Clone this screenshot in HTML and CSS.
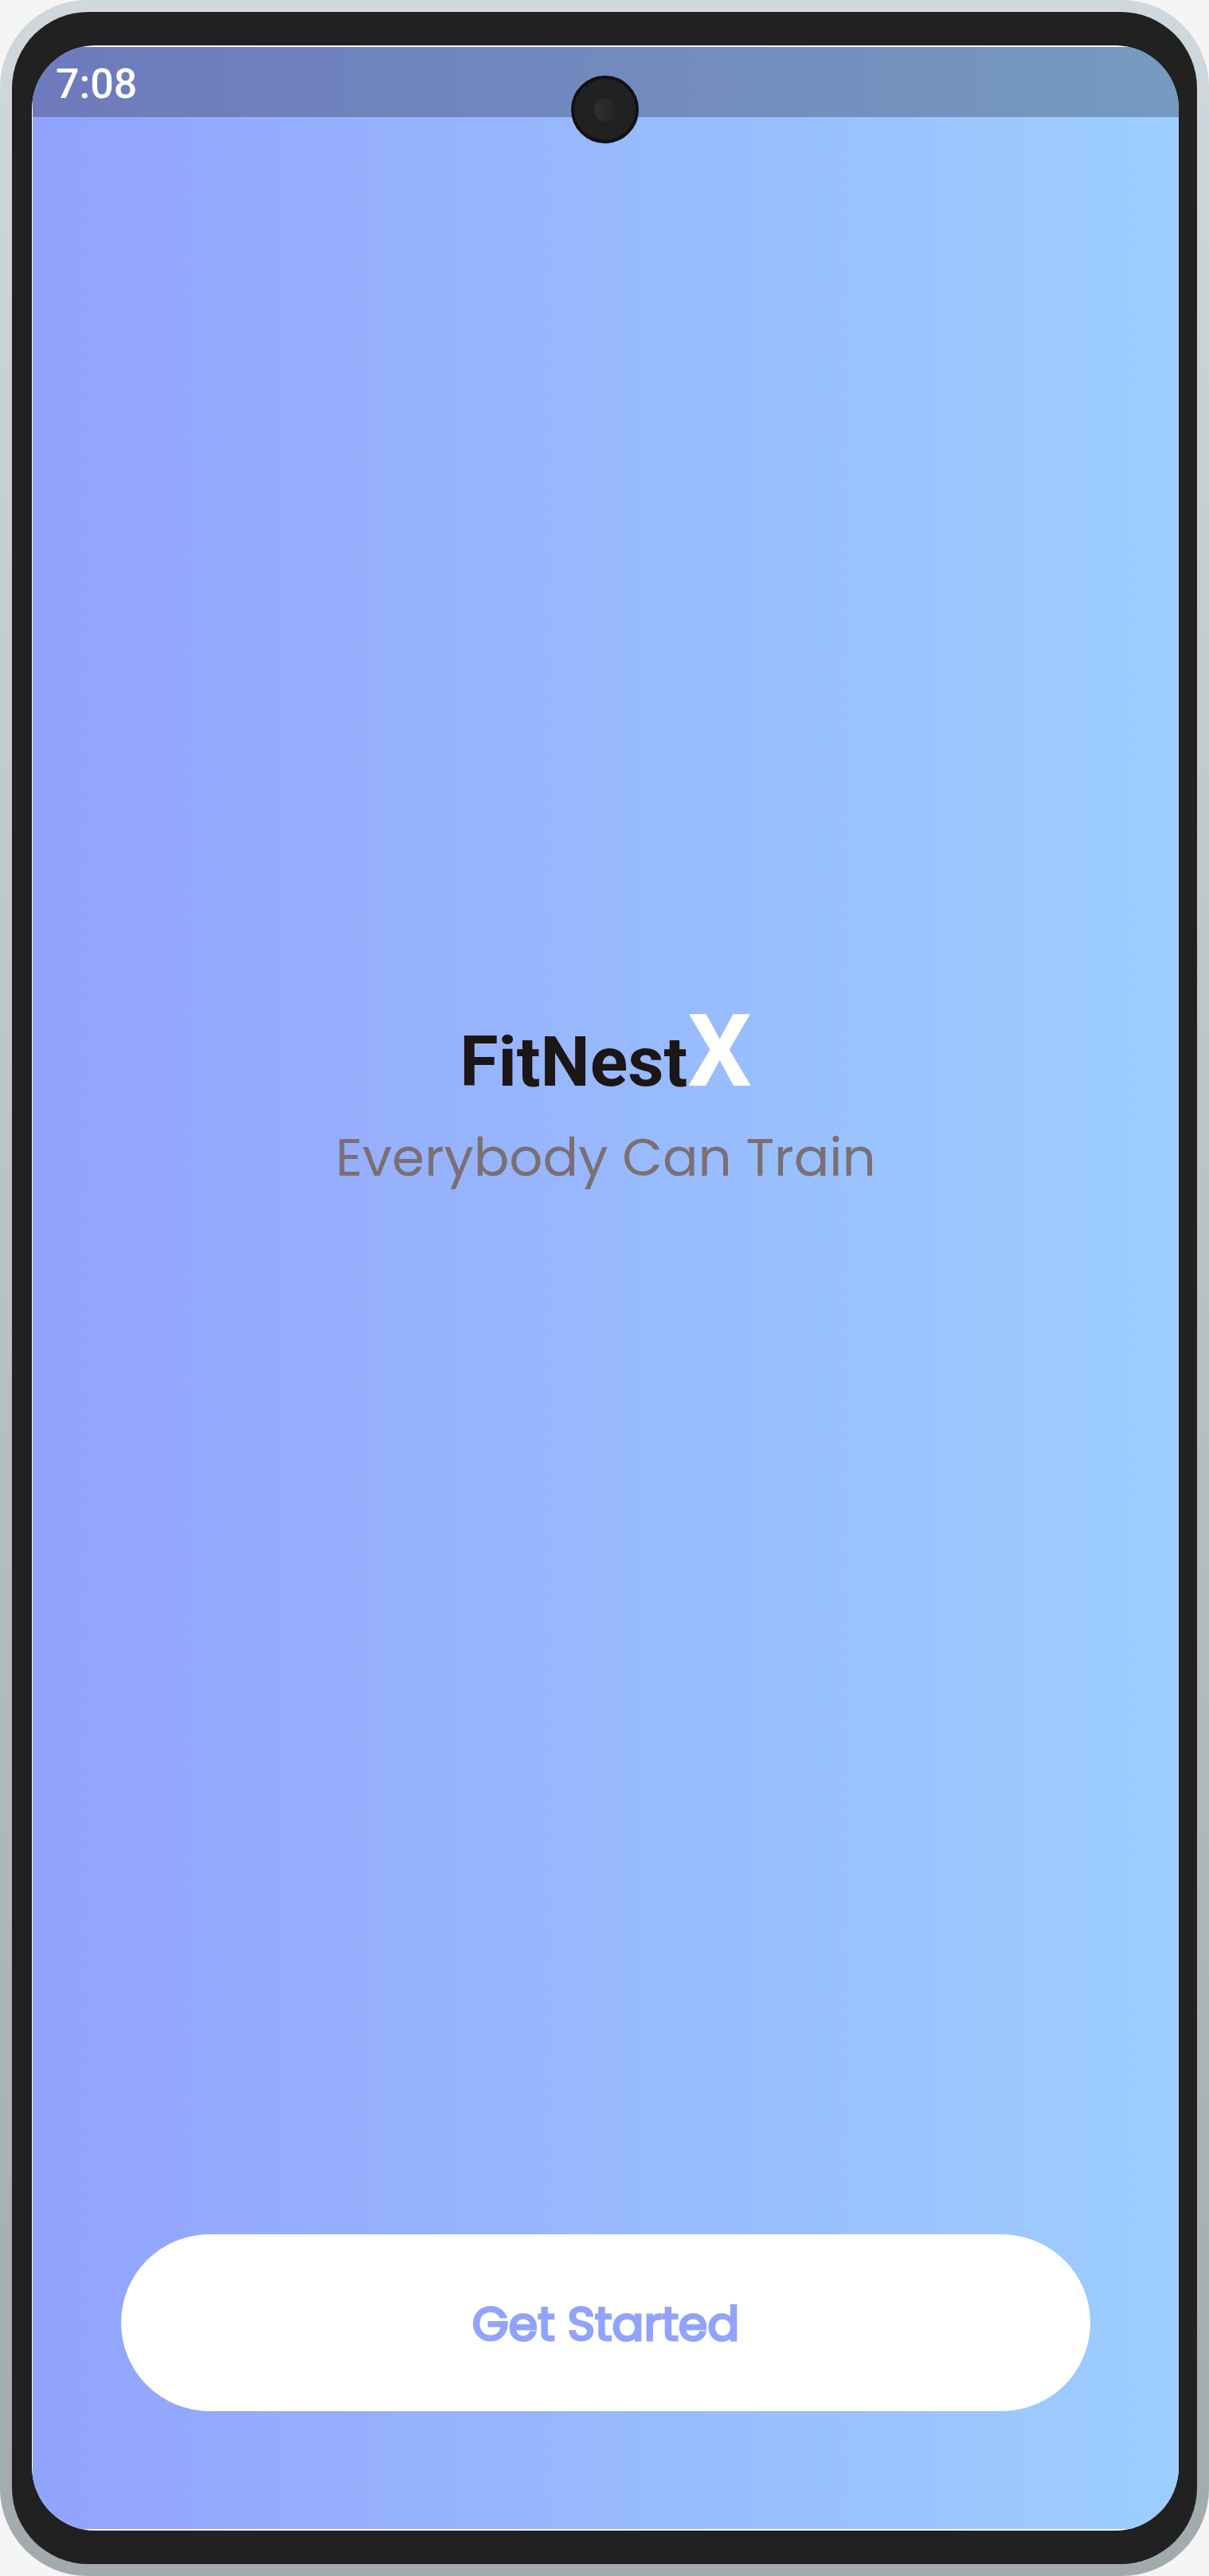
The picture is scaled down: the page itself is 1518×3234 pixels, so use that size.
FILE: index.html
```html
<!DOCTYPE html>
<html lang="en">
<head>
  <meta charset="utf-8">
  <meta name="viewport" content="width=device-width, initial-scale=1">
  <title>FitNestX</title>
  <link rel="stylesheet" href="styles.css">
</head>
<body>
  <div class="frame">
    <div class="bezel">
      <div class="display">
        <div class="screen">
          <header class="status"><time class="clock">7:08</time></header>
          <main class="welcome">
            <div class="intro">
              <h1 class="brand">FitNest<span class="brand-x">X</span></h1>
              <p class="tagline">Everybody Can Train</p>
            </div>
            <button class="start" type="button">Get Started</button>
          </main>
        </div>
      </div>
    </div>
    <div class="camera"><div class="lens"></div></div>
  </div>
</body>
</html>
```
FILE: styles.css
```css
* {
  box-sizing: border-box;
}

body {
  margin: 0;
  background: #f5f5f5;
  font-family: Roboto, sans-serif;
}

.frame {
  position: relative;
  display: flex;
  min-height: 100vh;
  padding: 15px;
  border-radius: 110px;
  background: linear-gradient(#cfd8dc, #b8c1c4 50%, #a1aaad);
}

.bezel {
  flex: 1;
  display: flex;
  padding: 42px 23px 42px 25px;
  border-radius: 96px;
  background: #212121;
}

.display {
  flex: 1;
  display: flex;
  padding: 2px 0 2px 1px;
  border-radius: 80px;
  background: #ffffff;
  overflow: hidden;
}

.screen {
  flex: 1;
  display: flex;
  flex-direction: column;
  background: linear-gradient(to right, #92a3fd, #9dceff);
}

.status {
  display: flex;
  align-items: center;
  height: 88px;
  padding: 6px 29px 0;
  background: rgba(0, 0, 0, 0.25);
}

.clock {
  color: #ffffff;
  font-size: 52px;
  line-height: 60px;
  font-weight: 500;
}

.welcome {
  flex: 1;
  display: flex;
  flex-direction: column;
  padding: 0 111px 148px;
}

.intro {
  flex: 1;
  display: flex;
  flex-direction: column;
  align-items: center;
  justify-content: center;
  padding-bottom: 208px;
  text-align: center;
}

.brand {
  margin: 0;
  color: #1d1617;
  font-size: 88px;
  line-height: 148px;
  font-weight: 700;
}

.brand-x {
  color: #ffffff;
  font-size: 127px;
}

.tagline {
  margin: 0;
  color: #7b6f72;
  font-family: Poppins, Inter, sans-serif;
  font-size: 66px;
  line-height: 92px;
}

.start {
  height: 222px;
  padding: 4px 0 0;
  border: 0;
  border-radius: 111px;
  background: #ffffff;
  color: #92a3fd;
  font-family: Poppins, Inter, sans-serif;
  font-size: 59px;
  line-height: 90px;
  font-weight: 400;
  -webkit-text-stroke: 3px #92a3fd;
}

.camera {
  position: absolute;
  top: 95px;
  left: calc(50% - 42px);
  display: grid;
  place-items: center;
  width: 85px;
  height: 85px;
  border: 4px solid #111111;
  border-radius: 50%;
  background: #212121;
}

.lens {
  width: 28px;
  height: 28px;
  border-radius: 50%;
  background: linear-gradient(to right, #303030, #232323);
}
```
